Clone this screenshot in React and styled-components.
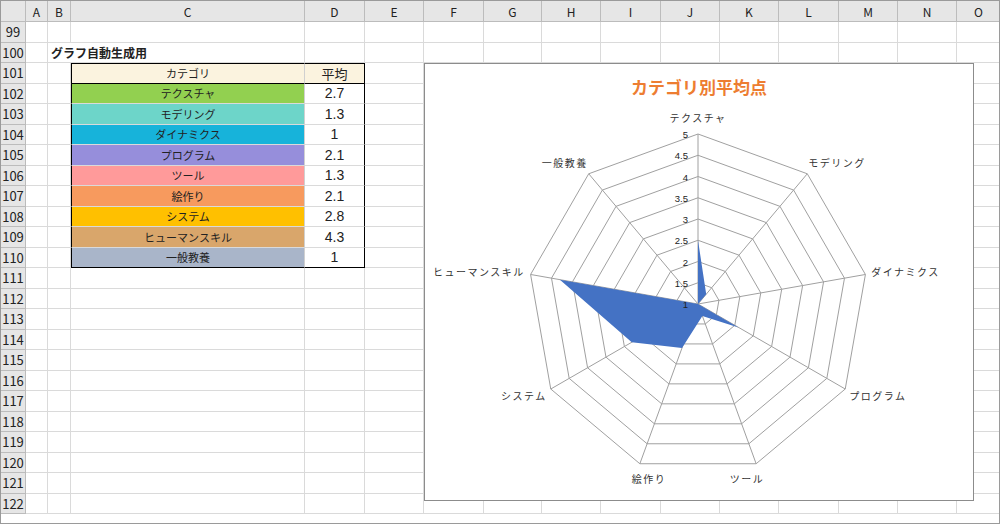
import React from "react";
import styled, { createGlobalStyle } from "styled-components";

const G = createGlobalStyle`
  body{margin:0;font-family:"Noto Sans CJK JP","Liberation Sans",sans-serif;background:#fff;overflow:hidden}
`;
const cols = [25, 22, 23, 234, 60, 59, 60, 58, 59, 60, 59, 59, 60, 59, 59, 44];
const names = ["", "A", "B", "C", "D", "E", "F", "G", "H", "I", "J", "K", "L", "M", "N", "O"];
const Sheet = styled.div`position:relative;width:1000px;height:524px;overflow:hidden;border:1px solid #9a9a9a;box-sizing:border-box;`;
const Grid = styled.div`display:grid;grid-template-columns:${cols.map(c => c + "px").join(" ")};grid-template-rows:21px;grid-auto-rows:20.5px;`;
const Cell = styled.div`
  grid-column:span ${p => p.$span || 1};
  border-right:1px solid ${p => p.$hd ? "#bcbcbc" : "#dadada"};
  border-bottom:1px solid ${p => p.$hd ? "#bcbcbc" : "#dadada"};
  background:${p => p.$bg || (p.$hd ? "#e6e6e6" : "#fff")};
  font-size:${p => p.$fs || 12}px;color:#222;display:flex;align-items:center;
  justify-content:${p => p.$left ? "flex-start" : "center"};white-space:nowrap;overflow:visible;
  font-weight:${p => p.$b ? 700 : 400};padding-left:${p => p.$left ? 3 : 0}px;box-sizing:border-box;
  ${p => p.$tb ? `border-left:1px solid #000;` : ""}
  ${p => p.$tr ? `border-right:1px solid #000;` : ""}
  ${p => p.$tt ? `border-top:1px solid #000;` : ""}
  ${p => p.$tbot ? `border-bottom:1px solid #000;` : ""}
  ${p => p.$num ? "font-family:'Liberation Sans',sans-serif;font-size:14px;" : ""}
`;
const rowsData = [
  ["カテゴリ", "平均", "#fbf3df"],
  ["テクスチャ", "2.7", "#92d050"],
  ["モデリング", "1.3", "#6dd5c9"],
  ["ダイナミクス", "1", "#17b3da"],
  ["プログラム", "2.1", "#968edb"],
  ["ツール", "1.3", "#ff9a9a"],
  ["絵作り", "2.1", "#f79a5e"],
  ["システム", "2.8", "#ffc000"],
  ["ヒューマンスキル", "4.3", "#d9a66b"],
  ["一般教養", "1", "#a9b5c9"],
];
const Chart = styled.div`position:absolute;left:423px;top:62px;width:550px;height:438px;background:#fff;border:1px solid #8c8c8c;box-sizing:border-box;`;
const Title = styled.div`text-align:center;color:#ed7d31;font-weight:700;font-size:17px;margin-top:10px;`;

const cats = ["テクスチャ", "モデリング", "ダイナミクス", "プログラム", "ツール", "絵作り", "システム", "ヒューマンスキル", "一般教養"];
const vals = [2.5, 1.3, 1, 2.1, 1.3, 2.1, 2.8, 4.3, 1];
const cx = 273, cy = 240, R = 170;
const pt = (i, r) => { const a = (i * 40) * Math.PI / 180; return [cx + r * Math.sin(a), cy - r * Math.cos(a)]; };

function Radar() {
  const rings = [];
  for (let k = 1; k <= 8; k++) {
    const r = R * k / 8;
    rings.push(<polygon key={k} points={cats.map((_, i) => pt(i, r).join(",")).join(" ")} fill="none" stroke="#a0a0a0" strokeWidth="1" />);
  }
  const poly = vals.map((v, i) => pt(i, (v - 1) / 4 * R).join(",")).join(" ");
  const anchors = ["middle", "start", "start", "start", "start", "end", "end", "end", "end"];
  return (
    <svg width="548" height="436" style={{ position: "absolute", left: 0, top: 0 }}>
      {rings}
      {cats.map((_, i) => { const [x, y] = pt(i, R); return <line key={i} x1={cx} y1={cy} x2={x} y2={y} stroke="#a0a0a0" />; })}
      <polygon points={poly} fill="#4472c4" />
      {cats.map((c, i) => {
        const [x, y] = pt(i, R + 14);
        const an = anchors[i];
        const dx = i === 0 ? 0 : i === 4 ? -14 : i === 5 ? 14 : an === "start" ? -8 : 8;
        return <text key={c} x={x + dx} y={i === 0 ? y + 2 : i === 4 || i === 5 ? y + 6 : y + 4} textAnchor={i === 4 || i === 5 ? "middle" : an} fontSize="10" letterSpacing="1.5" fill="#333" fontFamily="Noto Sans CJK JP, sans-serif">{c}</text>;
      })}
      {[1, 1.5, 2, 2.5, 3, 3.5, 4, 4.5, 5].map((v, k) => (
        <text key={v} x={cx - 10} y={cy - R * k / 8 + 4} textAnchor="end" fontSize="9.5" fill="#222" fontFamily="Liberation Sans, sans-serif">{v}</text>
      ))}
    </svg>
  );
}

export default function App() {
  const cells = [];
  names.forEach((n, i) => cells.push(<Cell key={"h" + i} $hd>{n}</Cell>));
  for (let r = 99; r <= 122; r++) {
    for (let c = 0; c < cols.length; c++) {
      const key = r + "-" + c;
      if (c === 0) { cells.push(<Cell key={key} $hd $fs={13}>{r}</Cell>); continue; }
      const ti = r - 101;
      if (ti >= 0 && ti < 10 && (c === 3 || c === 4)) {
        const d = rowsData[ti];
        const first = ti === 0, last = ti === 9;
        cells.push(<Cell key={key} $bg={c === 3 ? d[2] : (first ? d[2] : "#fff")} $num={c === 4 && !first} $fs={c === 4 ? 13 : 11}
          $tb={c === 3} $tr={c === 4} $tt={first} $tbot={last || first}
          style={c === 3 ? { borderRight: "1px solid #d0d0d0" } : undefined}>{c === 3 ? d[0] : d[1]}</Cell>);
        continue;
      }
      if (r === 100 && c === 2) { cells.push(<Cell key={key} $span={2} $left $b $fs={12}>グラフ自動生成用</Cell>); c++; continue; }
      cells.push(<Cell key={key} />);
    }
  }
  return (
    <Sheet>
      <G />
      <Grid>{cells}</Grid>
      <Chart>
        <Title>カテゴリ別平均点</Title>
        <Radar />
      </Chart>
    </Sheet>
  );
}
